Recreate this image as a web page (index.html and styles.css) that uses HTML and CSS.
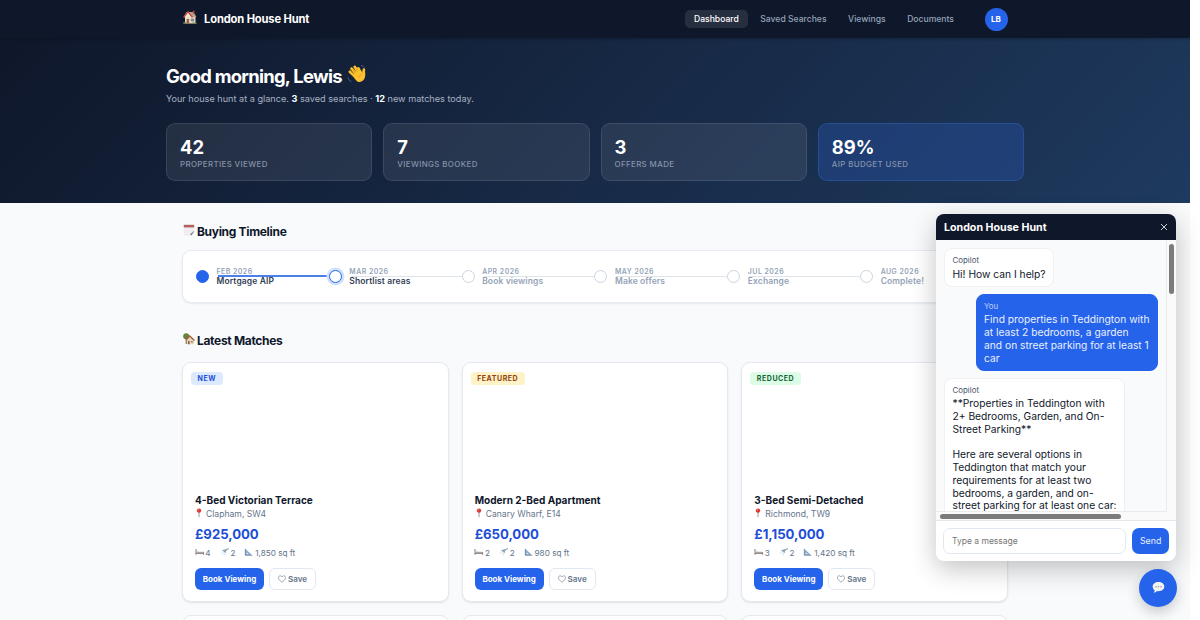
FILE: index.html
```html
<!DOCTYPE html>
<html lang="en">
<head>
  <meta charset="UTF-8">
  <meta name="viewport" content="width=device-width, initial-scale=1">
  <title>London House Hunt</title>
  <link rel="stylesheet" href="styles.css">
</head>
<body>

  <!-- ICONS -->
  <svg class="sprite" aria-hidden="true">
    <symbol id="bed" viewBox="0 0 10 8">
      <path d="M1 1v5.8M1 5.4h7.8M8.6 4v2.8" stroke="#7b6a64" stroke-width=".9" fill="none"/>
      <path d="M1.5 3.8h7.2v1.4H1.5z" fill="#a9a4a5"/>
      <path d="M1.5 2.8h2v1h-2z" fill="#cbd0d8"/>
    </symbol>
    <symbol id="shower" viewBox="0 0 10 8">
      <path d="M2 2.3 7 .7 5.5 5.2z" fill="#8fa7b3"/>
      <path d="M6 2 8.8.5" stroke="#9aa7af" stroke-width="1.2"/>
      <path d="M2 4.2 1.3 5.5M3.5 4.8l-.6 1.5M4.7 5.5l-.3 1.7" stroke="#b9d3e6" stroke-width=".7"/>
    </symbol>
    <symbol id="ruler" viewBox="0 0 10 8">
      <path d="M1 .5 8.5 7.5H1zM2.8 4.4v1.5h1.8z" fill="#8fa8c8" fill-rule="evenodd"/>
      <path d="M1.2 1v6.3h7" stroke="#6f86a8" stroke-width=".6" fill="none"/>
    </symbol>
    <symbol id="pin" viewBox="0 0 8 10">
      <path d="M4 4v5.3" stroke="#8a8f98" stroke-width=".9"/>
      <circle cx="4" cy="2.6" r="2.2" fill="#dc3431"/>
      <circle cx="3.4" cy="1.9" r=".6" fill="#f49a94"/>
    </symbol>
    <symbol id="heart" viewBox="0 0 8 8">
      <path d="M4 7.2C1.6 5.4.5 4.2.5 2.7.5.5 3.1.2 4 2c.9-1.8 3.5-1.5 3.5.7C7.5 4.2 6.4 5.4 4 7.2z"/>
    </symbol>
  </svg>

  <div class="page">

    <!-- HEADER -->
    <header class="topbar">
      <div class="topbar-inner">
        <svg class="logo" viewBox="0 0 14 15">
          <path d="M2 6.5h10.5v7H2z" fill="#eadbc3"/>
          <path d="M.5 7 3.5 2h7L13.5 7z" fill="#b9a28e"/>
          <path d="M.7 7.3 5 1.7l4.5 5.6" fill="#f0e3cf" stroke="#bd4236" stroke-width="1.3"/>
          <path d="M9.8.8h1.7v3H9.8z" fill="#b5493a"/>
          <path d="M3.6 9h2.5v4.5H3.6z" fill="#9a6243"/>
          <path d="M7.8 8.6h3.4v2.7H7.8z" fill="#758b9a"/>
          <path d="M.3 12.2h3v1.6h-3zM9 12.4h4.6v1.4H9z" fill="#7d8b61"/>
        </svg>
        <span class="brand">London House Hunt</span>
        <nav>
          <a class="active" href="#">Dashboard</a>
          <a href="#">Saved Searches</a>
          <a href="#">Viewings</a>
          <a href="#">Documents</a>
        </nav>
        <div class="avatar">LB</div>
      </div>
    </header>

    <!-- HERO -->
    <section class="hero">
      <div class="hero-inner">
        <h1>Good morning, Lewis
          <svg class="wave" viewBox="0 0 20 20">
            <g fill="none" stroke="#fbc02d" stroke-linecap="round" stroke-width="2.7">
              <path d="M8.5 13 2.8 7.8M10 11 4.6 4.6M12 10 7.7 2.8M14 9.5l-2.6-5.2"/>
              <path d="m16 12 .9-6.3"/>
            </g>
            <path d="M5.5 10.5 13.5 6l2.2 3 2.3-1.5c.8 5-.2 8-3 9.8-3.4 2-6.2.3-9.5-6.8z" fill="#fbc02d"/>
            <path d="m6.3 10.3-2-2M8.4 9 6 6M10.8 7.7 9.2 5M12 13.5c.3-1.8 1.5-3 3.5-3.6" stroke="#e09112" stroke-width=".6" fill="none"/>
            <path d="M1 13.5c.3 2.3 1.5 3.6 3.6 4M14 1.5c2 .2 3 1 3.6 2.3" stroke="#46658a" stroke-width=".9" fill="none"/>
          </svg>
        </h1>
        <p class="lead">Your house hunt at a glance. <b>3</b> saved searches · <b>12</b> new matches today.</p>
        <div class="stats">
          <div class="stat"><strong>42</strong><span>Properties viewed</span></div>
          <div class="stat"><strong>7</strong><span>Viewings booked</span></div>
          <div class="stat"><strong>3</strong><span>Offers made</span></div>
          <div class="stat highlight"><strong>89%</strong><span>AIP budget used</span></div>
        </div>
      </div>
    </section>

    <main>
      <!-- TIMELINE -->
      <h2>
        <svg class="h-icon" viewBox="0 0 12 12">
          <path d="M.8 1h10.4v7L8 11.4H.8z" fill="#f0ecef"/>
          <path d="M.8.8h10.4v2.6H.8z" fill="#b4605f"/>
          <path d="M11.2 7.8 8 11.4l-.4-1.5z" fill="#555b66"/>
          <path d="m7.3 10.5 3.6-3.6" stroke="#8a8d94" stroke-width=".7"/>
        </svg>
        Buying Timeline
      </h2>
      <div class="timeline">
        <div class="step done"><i></i><div><small>Feb 2026</small><span>Mortgage AIP</span></div></div>
        <div class="step current"><i></i><div><small>Mar 2026</small><span>Shortlist areas</span></div></div>
        <div class="step"><i></i><div><small>Apr 2026</small><span>Book viewings</span></div></div>
        <div class="step"><i></i><div><small>May 2026</small><span>Make offers</span></div></div>
        <div class="step"><i></i><div><small>Jul 2026</small><span>Exchange</span></div></div>
        <div class="step"><i></i><div><small>Aug 2026</small><span>Complete!</span></div></div>
      </div>

      <!-- MATCHES -->
      <h2>
        <svg class="h-icon" viewBox="0 0 12 12">
          <circle cx="3.2" cy="3.3" r="3" fill="#64843b"/>
          <path d="M2.7 5h1v6h-1z" fill="#7b5a3b"/>
          <path d="M4 6.5h7v4.8H4z" fill="#e9d6b4"/>
          <path d="m3 7 3.7-4L11.5 7.5" stroke="#a25f43" stroke-width="1.3" fill="#e9d6b4"/>
          <path d="M5 8h1.6v3.3H5z" fill="#94613f"/>
          <path d="M8 8h1.8v1.6H8z" fill="#7894a5"/>
        </svg>
        Latest Matches
      </h2>
      <div class="cards">
        <article class="card">
          <div class="photo"><span class="badge new">New</span></div>
          <h3>4-Bed Victorian Terrace</h3>
          <p class="place"><svg><use href="#pin"/></svg>Clapham, SW4</p>
          <p class="price">£925,000</p>
          <p class="facts">
            <span><svg><use href="#bed"/></svg>4</span>
            <span><svg><use href="#shower"/></svg>2</span>
            <span><svg><use href="#ruler"/></svg>1,850 sq ft</span>
          </p>
          <div class="actions"><button class="book">Book Viewing</button><button class="save"><svg><use href="#heart"/></svg>Save</button></div>
        </article>
        <article class="card">
          <div class="photo"><span class="badge featured">Featured</span></div>
          <h3>Modern 2-Bed Apartment</h3>
          <p class="place"><svg><use href="#pin"/></svg>Canary Wharf, E14</p>
          <p class="price">£650,000</p>
          <p class="facts">
            <span><svg><use href="#bed"/></svg>2</span>
            <span><svg><use href="#shower"/></svg>2</span>
            <span><svg><use href="#ruler"/></svg>980 sq ft</span>
          </p>
          <div class="actions"><button class="book">Book Viewing</button><button class="save"><svg><use href="#heart"/></svg>Save</button></div>
        </article>
        <article class="card">
          <div class="photo"><span class="badge reduced">Reduced</span></div>
          <h3>3-Bed Semi-Detached</h3>
          <p class="place"><svg><use href="#pin"/></svg>Richmond, TW9</p>
          <p class="price">£1,150,000</p>
          <p class="facts">
            <span><svg><use href="#bed"/></svg>3</span>
            <span><svg><use href="#shower"/></svg>2</span>
            <span><svg><use href="#ruler"/></svg>1,420 sq ft</span>
          </p>
          <div class="actions"><button class="book">Book Viewing</button><button class="save"><svg><use href="#heart"/></svg>Save</button></div>
        </article>
        <article class="card"></article>
        <article class="card"></article>
        <article class="card"></article>
      </div>
    </main>
  </div>

  <!-- CHAT -->
  <aside class="chat">
    <div class="chat-head">
      <span>London House Hunt</span>
      <svg viewBox="0 0 8 8"><path d="m1 1 6 6M7 1 1 7"/></svg>
    </div>
    <div class="chat-body">
      <div class="messages">
        <div class="msg"><small>Copilot</small><p>Hi! How can I help?</p></div>
        <div class="msg mine"><small>You</small><p>Find properties in Teddington with<br>at least 2 bedrooms, a garden<br>and on street parking for at least 1<br>car</p></div>
        <div class="msg long"><small>Copilot</small><p>**Properties in Teddington with<br>2+ Bedrooms, Garden, and On-<br>Street Parking**<br><br>Here are several options in<br>Teddington that match your<br>requirements for at least two<br>bedrooms, a garden, and on-<br>street parking for at least one car:</p></div>
      </div>
      <div class="track-y"><i></i></div>
      <div class="track-x"><i></i></div>
    </div>
    <div class="chat-form">
      <input type="text" placeholder="Type a message">
      <button>Send</button>
    </div>
  </aside>
  <button class="fab">
    <svg viewBox="0 0 13 13">
      <path d="M6.5 1c3.4 0 5.8 1.8 5.8 4.6s-2.4 4.6-5.8 4.6c-.6 0-1.2 0-1.7-.2-.8 1-1.9 1.6-3.3 1.7.8-.7 1.1-1.5 1.1-2.5C1.4 8.4.7 7.200.7 5.6.7 2.800 3.100 1 6.500 1z" fill="#f3f2f5"/>
      <g fill="#8e909b"><circle cx="4" cy="5.7" r=".75"/><circle cx="6.5" cy="5.7" r=".75"/><circle cx="9" cy="5.7" r=".75"/></g>
    </svg>
  </button>

</body>
</html>
```
FILE: styles.css
```css
* {box-sizing:border-box; margin:0; padding:0;}
body {
  font-family:'Inter',sans-serif;
  background:#fff; color:#0f172a;
  height:620px; overflow:hidden;
}
a {text-decoration:none; color:inherit;}
button, input {font-family:inherit;}
button {border:none;}
svg {display:block; flex:none;}
.sprite {display:none;}

.page {width:1190px; height:620px; overflow:hidden; background:#f8fafc;}

/* header */
.topbar {height:38px; background:#0f172a; position:relative; box-shadow:0 1px 3px rgba(0,0,0,.25);}
.topbar-inner {
  width:826px; height:38px; margin:0 auto;
  display:flex; align-items:center;
}
.logo {width:14px; height:15px; margin:-4px 7px 0 1px;}
.brand {color:#fff; font-size:11.2px; font-weight:700; letter-spacing:-.15px;}
nav {display:flex; gap:3.5px; margin-left:auto;}
nav a {
  color:#94a3b8; font-size:8.6px; font-weight:500;
  line-height:18px; padding:0 9px; border-radius:5px;
}
nav a.active {background:#272e3f; color:#fff;}
.avatar {
  width:23px; height:23px; border-radius:50%; margin-left:21.5px; margin-right:.5px;
  background:#2563eb; color:#fff; font-size:8px; font-weight:700;
  line-height:23px; text-align:center;
}

/* hero */
.hero {height:164.5px; padding-top:27px; background:linear-gradient(135deg,#0f172a,#1e3a5f);}
.hero-inner {width:858px; margin:0 auto;}
h1 {
  display:flex; gap:5px; color:#fff;
  font-size:18.4px; font-weight:700; line-height:23px; letter-spacing:-.72px;
}
.wave {width:20px; height:20px; margin-top:-1px;}
.lead {color:#a8b3c4; font-size:9.15px; line-height:14px; margin-top:4px;}
.lead b {color:#fff;}
.stats {display:grid; grid-template-columns:repeat(4,1fr); gap:11px; margin-top:17px;}
.stat {
  height:58px; padding:13px 13px 0; border-radius:9px;
  border:1px solid rgba(255,255,255,.1); background:rgba(255,255,255,.08);
}
.stat.highlight {background:rgba(37,80,165,.42); border-color:rgba(59,130,246,.25);}
.stat strong {display:block; color:#fff; font-size:18.4px; line-height:21px; font-weight:700;}
.stat span {
  display:block; color:#8492a9; font-size:7.9px; line-height:12px; font-weight:500;
  letter-spacing:.38px; text-transform:uppercase;
}

/* content */
main {width:826px; margin:0 auto; padding-top:19.5px;}
h2 {
  display:flex; gap:2px; align-items:center; height:18px;
  font-size:12px; font-weight:700; letter-spacing:-.32px;
}
.h-icon {width:12px; height:12px; margin-top:-3px; margin-left:1px;}

.timeline {
  height:53px; margin:9.5px 0 28.5px; padding:0 14px 0 13px;
  display:grid; grid-template-columns:repeat(6,1fr); align-items:center;
  background:#fff; border:1px solid #e8ecf1; border-radius:9px;
  box-shadow:0 1px 2px rgba(15,23,42,.08);
}
.step {display:flex; align-items:center; gap:7.5px; position:relative;}
.step:not(:last-child)::after {
  content:""; position:absolute; left:22px; right:0; top:50%;
  height:1px; margin-top:-.5px; background:#dfe4ea;
}
.step.done::after {right:0; background:#4a80ea; height:2px; margin-top:-1px;}
.step i {
  width:13px; height:13px; border-radius:50%; z-index:1;
  border:1.5px solid #cbd5e1; background:#fff;
}
.step.done i {background:#2563eb; border-color:#2563eb;}
.step.current i {border-color:#2563eb; box-shadow:0 0 0 2.5px #cfe2fb;}
.step div {padding-top:1.5px;}
.step small, .step span {display:block;}
.step small {
  color:#94a3b8; font-size:6.9px; font-weight:600; line-height:9px;
  letter-spacing:.5px; text-transform:uppercase;
}
.step span {color:#94a3b8; font-size:8.5px; font-weight:600; line-height:11px; letter-spacing:.11px;}
.step.done span, .step.current span {color:#334155;}

.cards {display:grid; grid-template-columns:repeat(3,1fr); gap:13px; margin-top:13px;}
.card {
  height:240px; padding:0 12px;
  background:#fff; border:1px solid #e5e9ef; border-radius:9px;
  box-shadow:0 1px 2px rgba(15,23,42,.1);
}
.photo {height:130px; margin-left:-4px; padding-top:8.5px;}
.badge {
  display:inline-block; vertical-align:top; padding:0 6.5px; border-radius:4px;
  font-size:7px; font-weight:700; line-height:13px; letter-spacing:.55px; text-transform:uppercase;
}
.badge.new {background:#dbeafe; color:#1d4ed8;}
.badge.featured {background:#fef3c7; color:#92400e;}
.badge.reduced {background:#dcfce7; color:#166534;}
h3 {font-size:10.05px; font-weight:700; line-height:14px;}
.place {display:flex; align-items:center; gap:3px; color:#64748b; font-size:8.6px; line-height:15px;}
.place svg {width:8px; height:10px; margin-top:-3px;}
.price {color:#1d4ed8; font-size:13.2px; font-weight:700; line-height:18px; margin-top:2.5px; letter-spacing:-.05px;}
.facts {display:flex; gap:9.5px; color:#64748b; font-size:8.2px; line-height:12px; margin-top:4.5px;}
.facts span {display:flex; align-items:center; gap:.8px;}
.facts svg {width:10px; height:8px; margin-top:-2px; margin-left:-.5px;}
.actions {display:flex; gap:5px; margin-top:8.5px;}
.actions button {height:22px; border-radius:6px; font-size:8.1px; font-weight:600;}
.actions .book {width:69px; background:#2563eb; color:#fff; font-size:8px; font-weight:700;}
.save {
  width:47px; display:flex; align-items:center; justify-content:center; gap:2px;
  background:#fff; color:#64748b; border:1px solid #e2e8f0;
}
.save svg {width:8px; height:8px; fill:none; stroke:#64748b; stroke-width:.6;}

/* chat window */
.chat {
  position:absolute; left:936px; top:213.5px; width:240px; height:347px;
  display:flex; flex-direction:column; overflow:hidden;
  background:#fff; border-radius:8px; box-shadow:0 8px 26px rgba(0,0,0,.24);
}
.chat-head {
  height:26px; padding:1px 8px 0; background:#0f172a; color:#fff;
  display:flex; align-items:center; justify-content:space-between;
  font-size:10.65px; font-weight:700;
}
.chat-head svg {width:8px; height:8px; fill:none; stroke:#fff; stroke-width:.8;}
.chat-body {
  height:281px; background:#fafafa; border-bottom:1px solid #e5e7eb;
  display:grid; grid-template-columns:231px 9px; grid-template-rows:272px 8px;
}
.messages {
  display:flex; flex-direction:column; align-items:flex-start; gap:6.5px;
  padding:8.5px 8px 0; overflow:hidden;
  background:#f8fafc; border-right:1px solid #ebebeb; border-bottom:1px solid #ebebeb;
}
.msg {
  flex:none; padding:6px 7.5px; border:1px solid #eef0f3; border-radius:8px;
  background:#fff; color:#0f172a;
}
.msg.mine {align-self:flex-end; background:#2563eb; border-color:#2563eb; color:#e9f0ff;}
.msg.long {width:181px;}
.msg small {display:block; font-size:7.9px; line-height:10.5px; margin-bottom:2px; color:#475569;}
.msg.mine small {color:#bfd2fb;}
.msg p {font-size:10.25px; line-height:12.75px; white-space:nowrap;}
.track-y {padding:4px 0 0 1.5px;}
.track-y i {display:block; width:5px; height:50px; border-radius:3px; background:#7b7b7b;}
.track-x {padding:2px 0 0 4px;}
.track-x i {display:block; width:181px; height:5px; border-radius:3px; background:#7b7b7b;}
.chat-form {height:40px; padding:7px; display:flex; gap:6px;}
.chat-form input {
  width:184px; height:26px; padding:0 8px; font-size:8.5px;
  border:1px solid #e2e8f0; border-radius:7px; background:#fff;
}
.chat-form input::placeholder {color:#757575;}
.chat-form button {width:37px; height:26px; border-radius:7px; background:#2563eb; color:#e9f0ff; font-size:8.8px;}

.fab {
  position:absolute; left:1139px; top:569px; width:38px; height:38px;
  display:flex; align-items:center; justify-content:center;
  border-radius:50%; background:#2563eb; box-shadow:0 5px 13px rgba(0,0,0,.2);
}
.fab svg {width:13px; height:13px; margin-top:-2px;}
```
